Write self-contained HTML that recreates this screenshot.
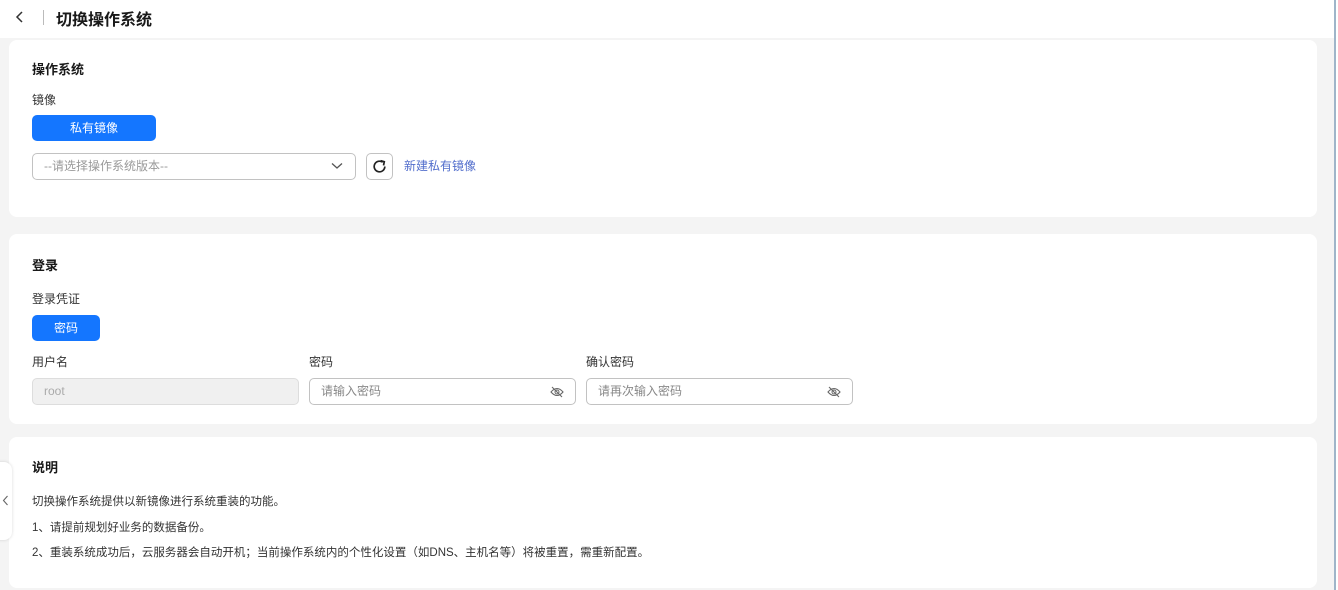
<!DOCTYPE html>
<html><head><meta charset="utf-8"><style>
*{box-sizing:border-box;margin:0;padding:0}
body{width:1338px;height:590px;overflow:hidden;background:#f4f4f4;font-family:"Liberation Sans","Noto Sans CJK SC",sans-serif;color:#191919;font-size:12px;position:relative}
.hdr{position:absolute;left:0;top:0;width:1334px;height:38px;background:#fff}
.hdr .t{position:absolute;left:56px;top:6px;font-size:16px;font-weight:bold}
.hdr .sep{position:absolute;left:43px;top:10px;width:1px;height:15px;background:#bbb}
.card{position:absolute;left:9px;width:1308px;background:#fff;border-radius:8px}
.h{position:absolute;left:23px;font-size:13px;font-weight:bold}
.l{position:absolute;font-size:12px;color:#333}
.btn{position:absolute;background:#1476ff;color:#fff;border-radius:5px;font-size:12px;text-align:center;line-height:26px;height:26px}
.inp{position:absolute;height:27px;border:1px solid #c2c2c2;border-radius:5px;color:#999;font-size:12px;line-height:25px;padding-left:11px;background:#fff}
.p{position:absolute;left:23px;font-size:11.5px;color:#333}
.sb{position:absolute;right:0;top:0;width:4px;height:590px;background:#fff;border-left:2px solid #9fb5c9}
</style></head><body>
<div class="hdr">
<svg style="position:absolute;left:14px;top:10px" width="12" height="14" viewBox="0 0 12 14"><path d="M8 2 L3 7 L8 12" fill="none" stroke="#333" stroke-width="1.5"/></svg>
<div class="sep"></div><div class="t">切换操作系统</div></div>
<div class="card" style="top:40px;height:177px">
<div class="h" style="top:19px">操作系统</div>
<div class="l" style="left:23px;top:51px">镜像</div>
<div class="btn" style="left:23px;top:75px;width:124px">私有镜像</div>
<div class="inp" style="left:23px;top:113px;width:324px">--请选择操作系统版本--
<svg style="position:absolute;right:12px;top:8px" width="12" height="8" viewBox="0 0 12 8"><path d="M1 1.5 L6 6 L11 1.5" fill="none" stroke="#555" stroke-width="1.3"/></svg></div>
<div class="inp" style="left:357px;top:113px;width:27px;padding:0">
<svg style="position:absolute;left:4px;top:4px" width="17" height="17" viewBox="0 0 16 16"><path d="M13 8 A5 5 0 1 1 11 4" fill="none" stroke="#222" stroke-width="1.6"/><path d="M9 2.5 L12.5 3.5 L11.8 7" fill="none" stroke="#222" stroke-width="1.6"/></svg></div>
<div class="l" style="left:395px;top:117px;color:#526ecc">新建私有镜像</div>
</div>
<div class="card" style="top:234px;height:190px">
<div class="h" style="top:21px">登录</div>
<div class="l" style="left:23px;top:56px">登录凭证</div>
<div class="btn" style="left:23px;top:81px;width:68px">密码</div>
<div class="l" style="left:23px;top:119px">用户名</div>
<div class="l" style="left:300px;top:119px">密码</div>
<div class="l" style="left:577px;top:119px">确认密码</div>
<div class="inp" style="left:23px;top:144px;width:267px;background:#f0f0f0;border-color:#ddd;color:#aaa">root</div>
<div class="inp" style="left:300px;top:144px;width:267px;color:#888">请输入密码<svg style="position:absolute;right:11px;top:7px" width="14" height="12" viewBox="0 0 14 12"><path d="M1 6 Q7 -1 13 6 Q7 13 1 6Z" fill="none" stroke="#666" stroke-width="1.1"/><circle cx="7" cy="6" r="2" fill="none" stroke="#666"/><path d="M2 1 L12 11" stroke="#666" stroke-width="1.1"/></svg></div>
<div class="inp" style="left:577px;top:144px;width:267px;color:#888">请再次输入密码<svg style="position:absolute;right:11px;top:7px" width="14" height="12" viewBox="0 0 14 12"><path d="M1 6 Q7 -1 13 6 Q7 13 1 6Z" fill="none" stroke="#666" stroke-width="1.1"/><circle cx="7" cy="6" r="2" fill="none" stroke="#666"/><path d="M2 1 L12 11" stroke="#666" stroke-width="1.1"/></svg></div>
</div>
<div class="card" style="top:437px;height:151px">
<div class="h" style="top:20px">说明</div>
<div class="p" style="top:56px">切换操作系统提供以新镜像进行系统重装的功能。</div>
<div class="p" style="top:82px">1、请提前规划好业务的数据备份。</div>
<div class="p" style="top:107px">2、重装系统成功后，云服务器会自动开机；当前操作系统内的个性化设置（如DNS、主机名等）将被重置，需重新配置。</div>
</div>
<div style="position:absolute;left:-4px;top:462px;width:16px;height:78px;background:#fff;border-radius:0 8px 8px 0;box-shadow:0 0 3px rgba(0,0,0,.15)">
<svg style="position:absolute;left:6px;top:33px" width="7" height="11" viewBox="0 0 7 11"><path d="M5.5 1 L1.5 5.5 L5.5 10" fill="none" stroke="#666" stroke-width="1.1"/></svg></div>
<div class="sb"></div>
</body></html>
